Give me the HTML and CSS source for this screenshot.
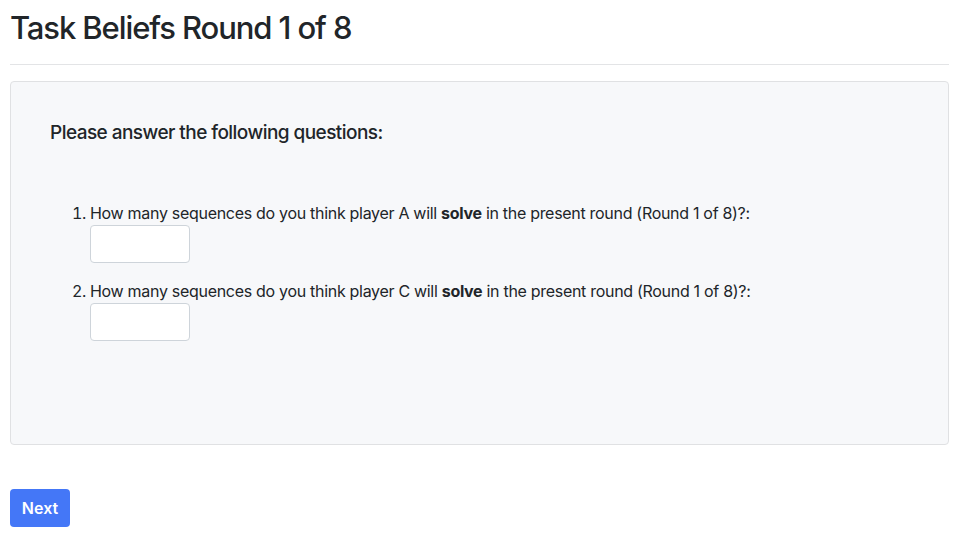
FILE: index.html
```html
<!DOCTYPE html>
<html>
<head>
<meta charset="utf-8">
<link rel="stylesheet" href="styles.css">
</head>
<body>
<div class="container">
  <h1 class="title">Task Beliefs Round 1 of 8</h1>
  <hr class="rule">
  <div class="card">
    <h5 class="card-heading">Please answer the following questions:</h5>
    <ol class="questions">
      <li class="question">
        <label class="question-label">How many sequences do you think player A will <b>solve</b> in the present round (Round 1 of 8)?:</label>
        <input class="field" type="text">
      </li>
      <li class="question">
        <label class="question-label">How many sequences do you think player C will <b>solve</b> in the present round (Round 1 of 8)?:</label>
        <input class="field" type="text">
      </li>
    </ol>
  </div>
  <button class="btn-next">Next</button>
</div>
</body>
</html>
```

FILE: styles.css
```css
html, body {
  margin: 0;
  padding: 0;
  background: #ffffff;
}
body {
  font-family: Inter, Roboto, "Liberation Sans", sans-serif;
  color: #212529;
  font-size: 16px;
  line-height: 1.5;
}
.container {
  padding: 0 10px;
}
.title {
  margin: 0;
  padding-top: 8px;
  font-size: 31px;
  font-weight: 500;
  line-height: 40px;
  letter-spacing: -1.1px;
}
.rule {
  margin: 16px 0 16px 0;
  border: 0;
  border-top: 1px solid #e3e4e6;
}
.card {
  background: #f7f8fa;
  border: 1px solid #e0e1e3;
  border-radius: 4px;
  padding: 39px 39px 103px 39px;
}
.card-heading {
  margin: 0;
  font-size: 19px;
  font-weight: 500;
  line-height: 24px;
  letter-spacing: -0.55px;
}
.questions {
  margin: 56px 0 0 0;
  padding-left: 40px;
}
.question {
  font-size: 16px;
  letter-spacing: -0.3px;
}
.question + .question {
  margin-top: 16px;
}
.question-label {
  display: block;
  line-height: 22px;
  margin-bottom: 1px;
}
.field {
  display: block;
  width: 100px;
  height: 38px;
  box-sizing: border-box;
  border: 1px solid #ced4da;
  border-radius: 4px;
  background: #fff;
}
.btn-next {
  margin-top: 44px;
  background: #4477f7;
  color: #fff;
  border: 0;
  border-radius: 4px;
  height: 38px;
  width: 60px;
  font-family: inherit;
  font-size: 16px;
  font-weight: 600;
  padding: 0;
}
```
